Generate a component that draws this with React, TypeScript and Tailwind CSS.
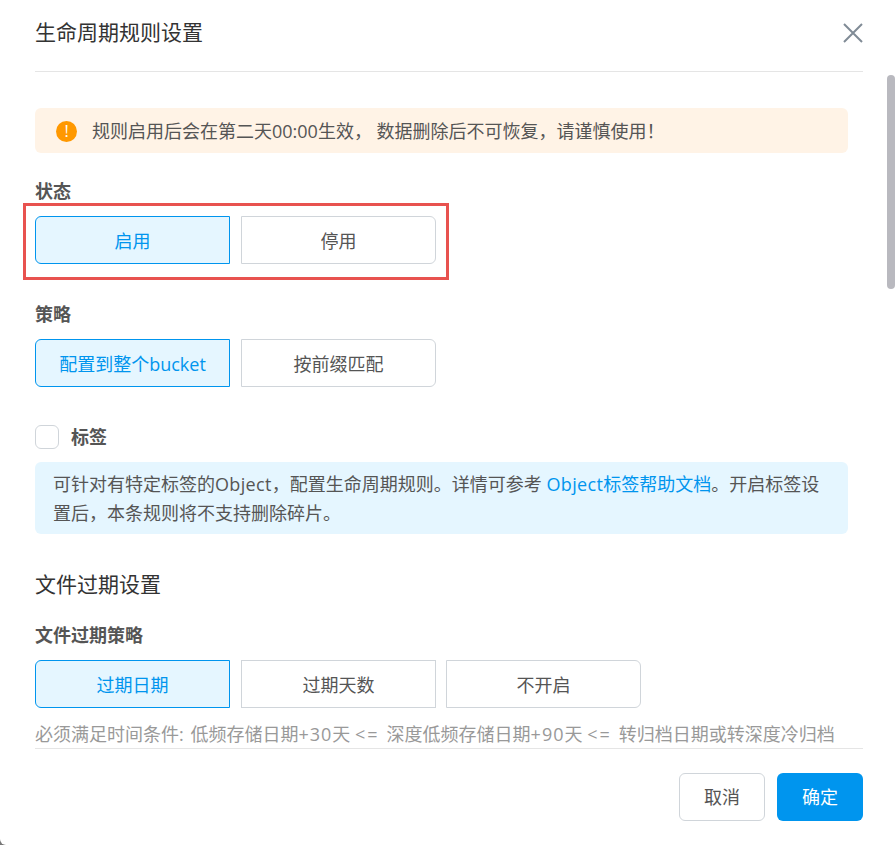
const FONT = "font-['Microsoft_YaHei','Open_Sans','Noto_Sans_CJK_SC',sans-serif]";

function Choice({ label, kind }: { label: string; kind: "active" | "middle" | "last" }) {
  const base = "w-[195px] h-12 pt-[2px] flex items-center justify-center border text-[18px]";
  if (kind === "active") {
    return <div className={`${base} border-[#0095ee] bg-[#e5f6ff] text-[#0095ee] rounded-l-md`}>{label}</div>;
  }
  if (kind === "middle") {
    return <div className={`${base} border-[#d0d5da] bg-white text-[#555]`}>{label}</div>;
  }
  return <div className={`${base} border-[#d0d5da] bg-white text-[#555] rounded-r-md`}>{label}</div>;
}

function Label({ children }: { children: React.ReactNode }) {
  return <div className="text-[18px] leading-[24px] font-bold text-[#555]">{children}</div>;
}

export default function App() {
  return (
    <div className="w-[896px] h-[845px] bg-[#777]">
      <div className={`relative w-full h-full overflow-hidden bg-white rounded-bl-[6px] flex flex-col ${FONT}`}>
        <header className="mx-[35px] w-[828px] h-[72px] shrink-0 border-b border-[#e5e5e5] flex items-center justify-between pb-[5px]">
          <h1 className="text-[21px] font-normal text-[#333]">生命周期规则设置</h1>
          <svg width="20" height="20" viewBox="0 0 20 20" fill="none" stroke="#808b96" strokeWidth="2">
            <path d="M1 1L19 19M19 1L1 19" />
          </svg>
        </header>

        <main className="relative flex-1 min-h-0 overflow-hidden px-[35px] pt-[36px]">
          <div className="w-[813px] h-[45px] pt-px rounded-md bg-[#fff3e6] flex items-center pl-[21px] text-[18px] text-[#555]">
            <span className="w-[21px] h-[21px] rounded-full bg-[#ff9800] text-white text-[16px] leading-[21px] text-center shrink-0">!</span>
            <span className="ml-[15px]">规则启用后会在第二天00:00生效， 数据删除后不可恢复，请谨慎使用！</span>
          </div>

          <div className="mt-[26px]"><Label>状态</Label></div>
          <div className="mt-[13px] flex gap-[11px]">
            <Choice label="启用" kind="active" />
            <Choice label="停用" kind="last" />
          </div>

          <div className="mt-[38px]"><Label>策略</Label></div>
          <div className="mt-[13px] flex gap-[11px]">
            <Choice label="配置到整个bucket" kind="active" />
            <Choice label="按前缀匹配" kind="last" />
          </div>

          <div className="mt-[38px] flex items-center gap-3">
            <span className="w-6 h-6 rounded-md border border-[#d0d5da] bg-white" />
            <Label>标签</Label>
          </div>
          <div className="mt-[13px] w-[813px] h-[72px] rounded-md bg-[#e5f6ff] pl-[18px] pr-[16px] pt-[8px] text-[18px] leading-[29px] text-[#555]">
            可针对有特定标签的<span className="tracking-[0.35px]">Object</span>，配置生命周期规则。详情可参考 <span className="text-[#0095ee]"><span className="tracking-[0.35px]">Object</span>标签帮助文档</span>。开启标签设置后，本条规则将不支持删除碎片。
          </div>

          <h2 className="mt-[36px] text-[21px] leading-[28px] font-normal text-[#333]">文件过期设置</h2>
          <div className="mt-[25px]"><Label>文件过期策略</Label></div>
          <div className="mt-[13px] flex gap-[11px]">
            <Choice label="过期日期" kind="active" />
            <Choice label="过期天数" kind="middle" />
            <div className="-ml-px">
              <Choice label="不开启" kind="last" />
            </div>
          </div>
          <p className="mt-[13px] text-[18px] leading-[26px] whitespace-nowrap text-[#999]">
            必须满足时间条件<span className="tracking-[2px]">:</span> 低频存储日期<span className="tracking-[1px]">+30</span>天&nbsp;<span className="tracking-[2px]">&lt;=</span><span className="ml-[7px]">深度低频存储日期</span><span className="tracking-[1px]">+90</span>天&nbsp;<span className="tracking-[2px]">&lt;=</span><span className="ml-[7px]">转归档日期或转深度冷归档</span>
          </p>

          <div className="absolute right-[1px] top-[3px] w-2 h-[214px] rounded-full bg-[#b9b9bf]" />
        </main>

        <footer className="mx-[35px] w-[828px] h-[97px] shrink-0 border-t border-[#e5e5e5] flex justify-end gap-3 pt-[24px]">
          <button className="w-[86px] h-12 rounded-md border border-[#d0d5da] bg-white text-[18px] text-[#555]">取消</button>
          <button className="w-[86px] h-12 rounded-md bg-[#0095ee] text-[18px] text-white">确定</button>
        </footer>

        <div className="absolute left-[23px] top-[203px] w-[426px] h-[77px] border-[3px] border-[#e8524f]" />
      </div>
    </div>
  );
}
